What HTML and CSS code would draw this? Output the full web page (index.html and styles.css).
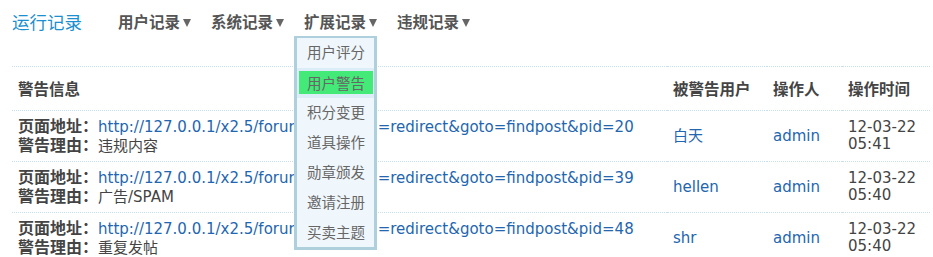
FILE: index.html
```html
<!DOCTYPE html>
<html lang="zh-CN">
    <head>
        <title>运行记录</title>
        <meta charset="utf-8">
        <link rel="stylesheet" href="styles.css">
    </head>
    <body>
        <div class="topbar">
            <h3 class="title">运行记录</h3>
            <ul class="nav">
                <li><a href="#">用户记录<span class="caret"></span></a></li>
                <li><a href="#">系统记录<span class="caret"></span></a></li>
                <li class="dropdown">
                    <a href="#">扩展记录<span class="caret"></span></a>
                    <div class="dropdown-content">
                        <a href="#">用户评分</a>
                        <a href="#" class="current"><span>用户警告</span></a>
                        <a href="#">积分变更</a>
                        <a href="#">道具操作</a>
                        <a href="#">勋章颁发</a>
                        <a href="#">邀请注册</a>
                        <a href="#">买卖主题</a>
                    </div>
                </li>
                <li><a href="#">违规记录<span class="caret"></span></a></li>
            </ul>
        </div>

        <table class="tb">
            <tr class="header">
                <th class="c1">警告信息</th>
                <th class="c2">被警告用户</th>
                <th class="c3">操作人</th>
                <th class="c4">操作时间</th>
            </tr>
            <tr>
                <td><b>页面地址：</b><a href="#">http://127.0.0.1/x2.5/forum.php?mod=redirect&amp;goto=findpost&amp;pid=20</a><br><b>警告理由：</b>违规内容</td>
                <td><a href="#">白天</a></td>
                <td><a href="#">admin</a></td>
                <td>12-03-22<br>05:41</td>
            </tr>
            <tr>
                <td><b>页面地址：</b><a href="#">http://127.0.0.1/x2.5/forum.php?mod=redirect&amp;goto=findpost&amp;pid=39</a><br><b>警告理由：</b>广告/SPAM</td>
                <td><a href="#">hellen</a></td>
                <td><a href="#">admin</a></td>
                <td>12-03-22<br>05:40</td>
            </tr>
            <tr>
                <td><b>页面地址：</b><a href="#">http://127.0.0.1/x2.5/forum.php?mod=redirect&amp;goto=findpost&amp;pid=48</a><br><b>警告理由：</b>重复发帖</td>
                <td><a href="#">shr</a></td>
                <td><a href="#">admin</a></td>
                <td>12-03-22<br>05:40</td>
            </tr>
        </table>
    </body>
</html>
```

FILE: styles.css
```css
* {
    box-sizing: border-box;
}
body {
    margin: 0;
    padding: 0 3px 0 12px;
    font-family: "DejaVu Sans", Verdana, "Noto Sans CJK SC", sans-serif;
    font-size: 15px;
    color: #444;
    background: #fff;
}
a {
    color: #2366b0;
    text-decoration: none;
}
/* top title + menu */
.topbar {
    display: flex;
    align-items: center;
    height: 42px;
}
.title {
    margin: 0 36px 0 0;
    font-size: 17.5px;
    font-weight: normal;
    color: #1b8fd0;
    font-family: "Noto Sans CJK SC", sans-serif;
}
.nav {
    list-style-type: none;
    display: flex;
    margin: 0;
    padding: 0;
}
.nav li {
    position: relative;
    margin-right: 20px;
}
.nav li a {
    display: block;
    color: #555;
    font-weight: bold;
    font-size: 15.5px;
    line-height: 22px;
    font-family: "Noto Sans CJK SC", sans-serif;
}
.caret {
    display: inline-block;
    width: 0;
    height: 0;
    margin-left: 3px;
    border-left: 4px solid transparent;
    border-right: 4px solid transparent;
    border-top: 8px solid #666;
    vertical-align: 1px;
}
/* open submenu */
.dropdown-content {
    position: absolute;
    top: 26px;
    left: -10px;
    width: 83px;
    height: 214px;
    padding: 0;
    background-color: #f0f7fc;
    border: 3px solid #aecfdc;
    border-top-width: 2px;
    z-index: 1;
}
.nav .dropdown-content a {
    height: 30px;
    line-height: 28px;
    padding-left: 10px;
    font-weight: normal;
    font-size: 14.5px;
    color: #666;
}
.nav .dropdown-content a.current {
    background-color: #dcedf8;
    padding: 3px 1px 0 2px;
}
.dropdown-content a.current span {
    display: block;
    height: 23px;
    line-height: 23px;
    padding-left: 8px;
    background-color: #44ea77;
}
/* log table */
.tb {
    width: 918px;
    margin-top: 24px;
    border-collapse: collapse;
    border-top: 1px dotted #c6e0f0;
}
.tb td, .tb th {
    padding: 0 6px;
    border-bottom: 1px dotted #c6e0f0;
    line-height: 17px;
    vertical-align: middle;
    text-align: left;
}
.tb th {
    height: 44px;
    font-family: "Noto Sans CJK SC", sans-serif;
    font-size: 15.5px;
    color: #444;
}
.tb td {
    height: 51px;
}
.tb td b {
    font-family: "Noto Sans CJK SC", sans-serif;
    font-size: 16px;
    color: #444;
}
.c1 {
    width: 655px;
}
.c2 {
    width: 100px;
}
.c3 {
    width: 75px;
}
```
